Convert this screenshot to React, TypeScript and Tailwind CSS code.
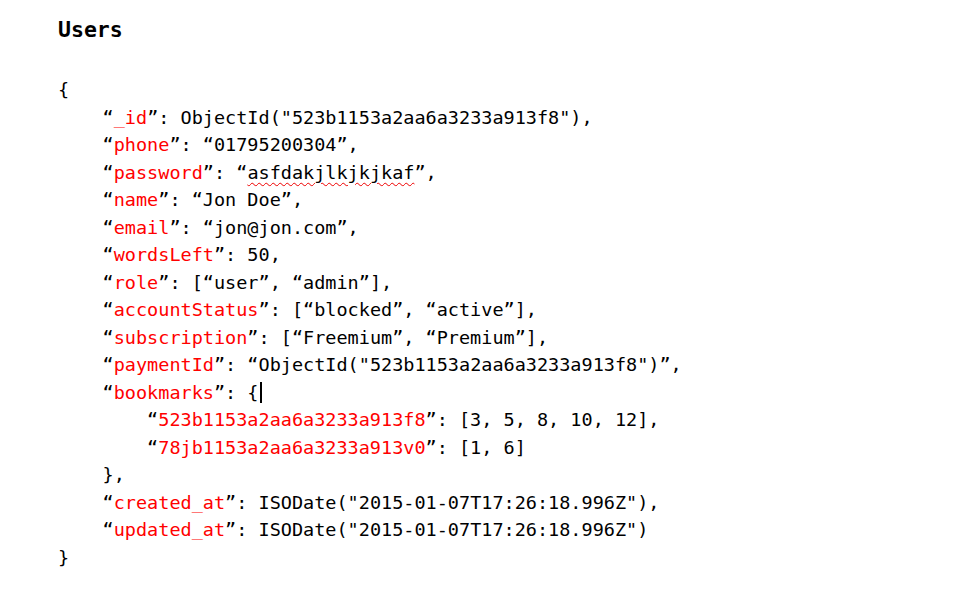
import React from 'react';

type Part = { t: string; red?: boolean; wavy?: boolean; caret?: boolean };

const K = (t: string): Part => ({ t, red: true });
const P = (t: string): Part => ({ t });

const lines: { indent: number; parts: Part[] }[] = [
  { indent: 0, parts: [P('{')] },
  { indent: 1, parts: [P('“'), K('_id'), P('”: ObjectId("523b1153a2aa6a3233a913f8"),')] },
  { indent: 1, parts: [P('“'), K('phone'), P('”: “01795200304”,')] },
  {
    indent: 1,
    parts: [P('“'), K('password'), P('”: “'), { t: 'asfdakjlkjkjkaf', wavy: true }, P('”,')],
  },
  { indent: 1, parts: [P('“'), K('name'), P('”: “Jon Doe”,')] },
  { indent: 1, parts: [P('“'), K('email'), P('”: “jon@jon.com”,')] },
  { indent: 1, parts: [P('“'), K('wordsLeft'), P('”: 50,')] },
  { indent: 1, parts: [P('“'), K('role'), P('”: [“user”, “admin”],')] },
  { indent: 1, parts: [P('“'), K('accountStatus'), P('”: [“blocked”, “active”],')] },
  { indent: 1, parts: [P('“'), K('subscription'), P('”: [“Freemium”, “Premium”],')] },
  {
    indent: 1,
    parts: [P('“'), K('paymentId'), P('”: “ObjectId("523b1153a2aa6a3233a913f8")”,')],
  },
  { indent: 1, parts: [P('“'), K('bookmarks'), P('”: {'), { t: '', caret: true }] },
  { indent: 2, parts: [P('“'), K('523b1153a2aa6a3233a913f8'), P('”: [3, 5, 8, 10, 12],')] },
  { indent: 2, parts: [P('“'), K('78jb1153a2aa6a3233a913v0'), P('”: [1, 6]')] },
  { indent: 1, parts: [P('},')] },
  {
    indent: 1,
    parts: [P('“'), K('created_at'), P('”: ISODate("2015-01-07T17:26:18.996Z"),')],
  },
  {
    indent: 1,
    parts: [P('“'), K('updated_at'), P('”: ISODate("2015-01-07T17:26:18.996Z")')],
  },
  { indent: 0, parts: [P('}')] },
];

const App = () => {
  return (
    <div className="w-[960px] h-[592px] bg-white text-black overflow-hidden pl-[58px] pt-[16px] font-['DejaVu_Sans_Mono','Liberation_Mono',monospace]">
      <h1 className="text-[21.5px] font-bold leading-[28px]">Users</h1>
      <div className="mt-[32px] text-[18.5px] leading-[27.5px]">
        {lines.map((line, i) => (
          <div key={i} className="whitespace-pre flex items-center">
            <span>{'    '.repeat(line.indent)}</span>
            {line.parts.map((p, j) =>
              p.caret ? (
                <span key={j} className="inline-block w-[2px] h-[21px] bg-black ml-[1px]" />
              ) : (
                <span
                  key={j}
                  className={`${p.red ? 'text-[#f00]' : ''} ${
                    p.wavy ? 'underline decoration-wavy decoration-[#e00] decoration-1 underline-offset-[3px]' : ''
                  }`}
                >
                  {p.t}
                </span>
              )
            )}
          </div>
        ))}
      </div>
    </div>
  );
};

export default App;
